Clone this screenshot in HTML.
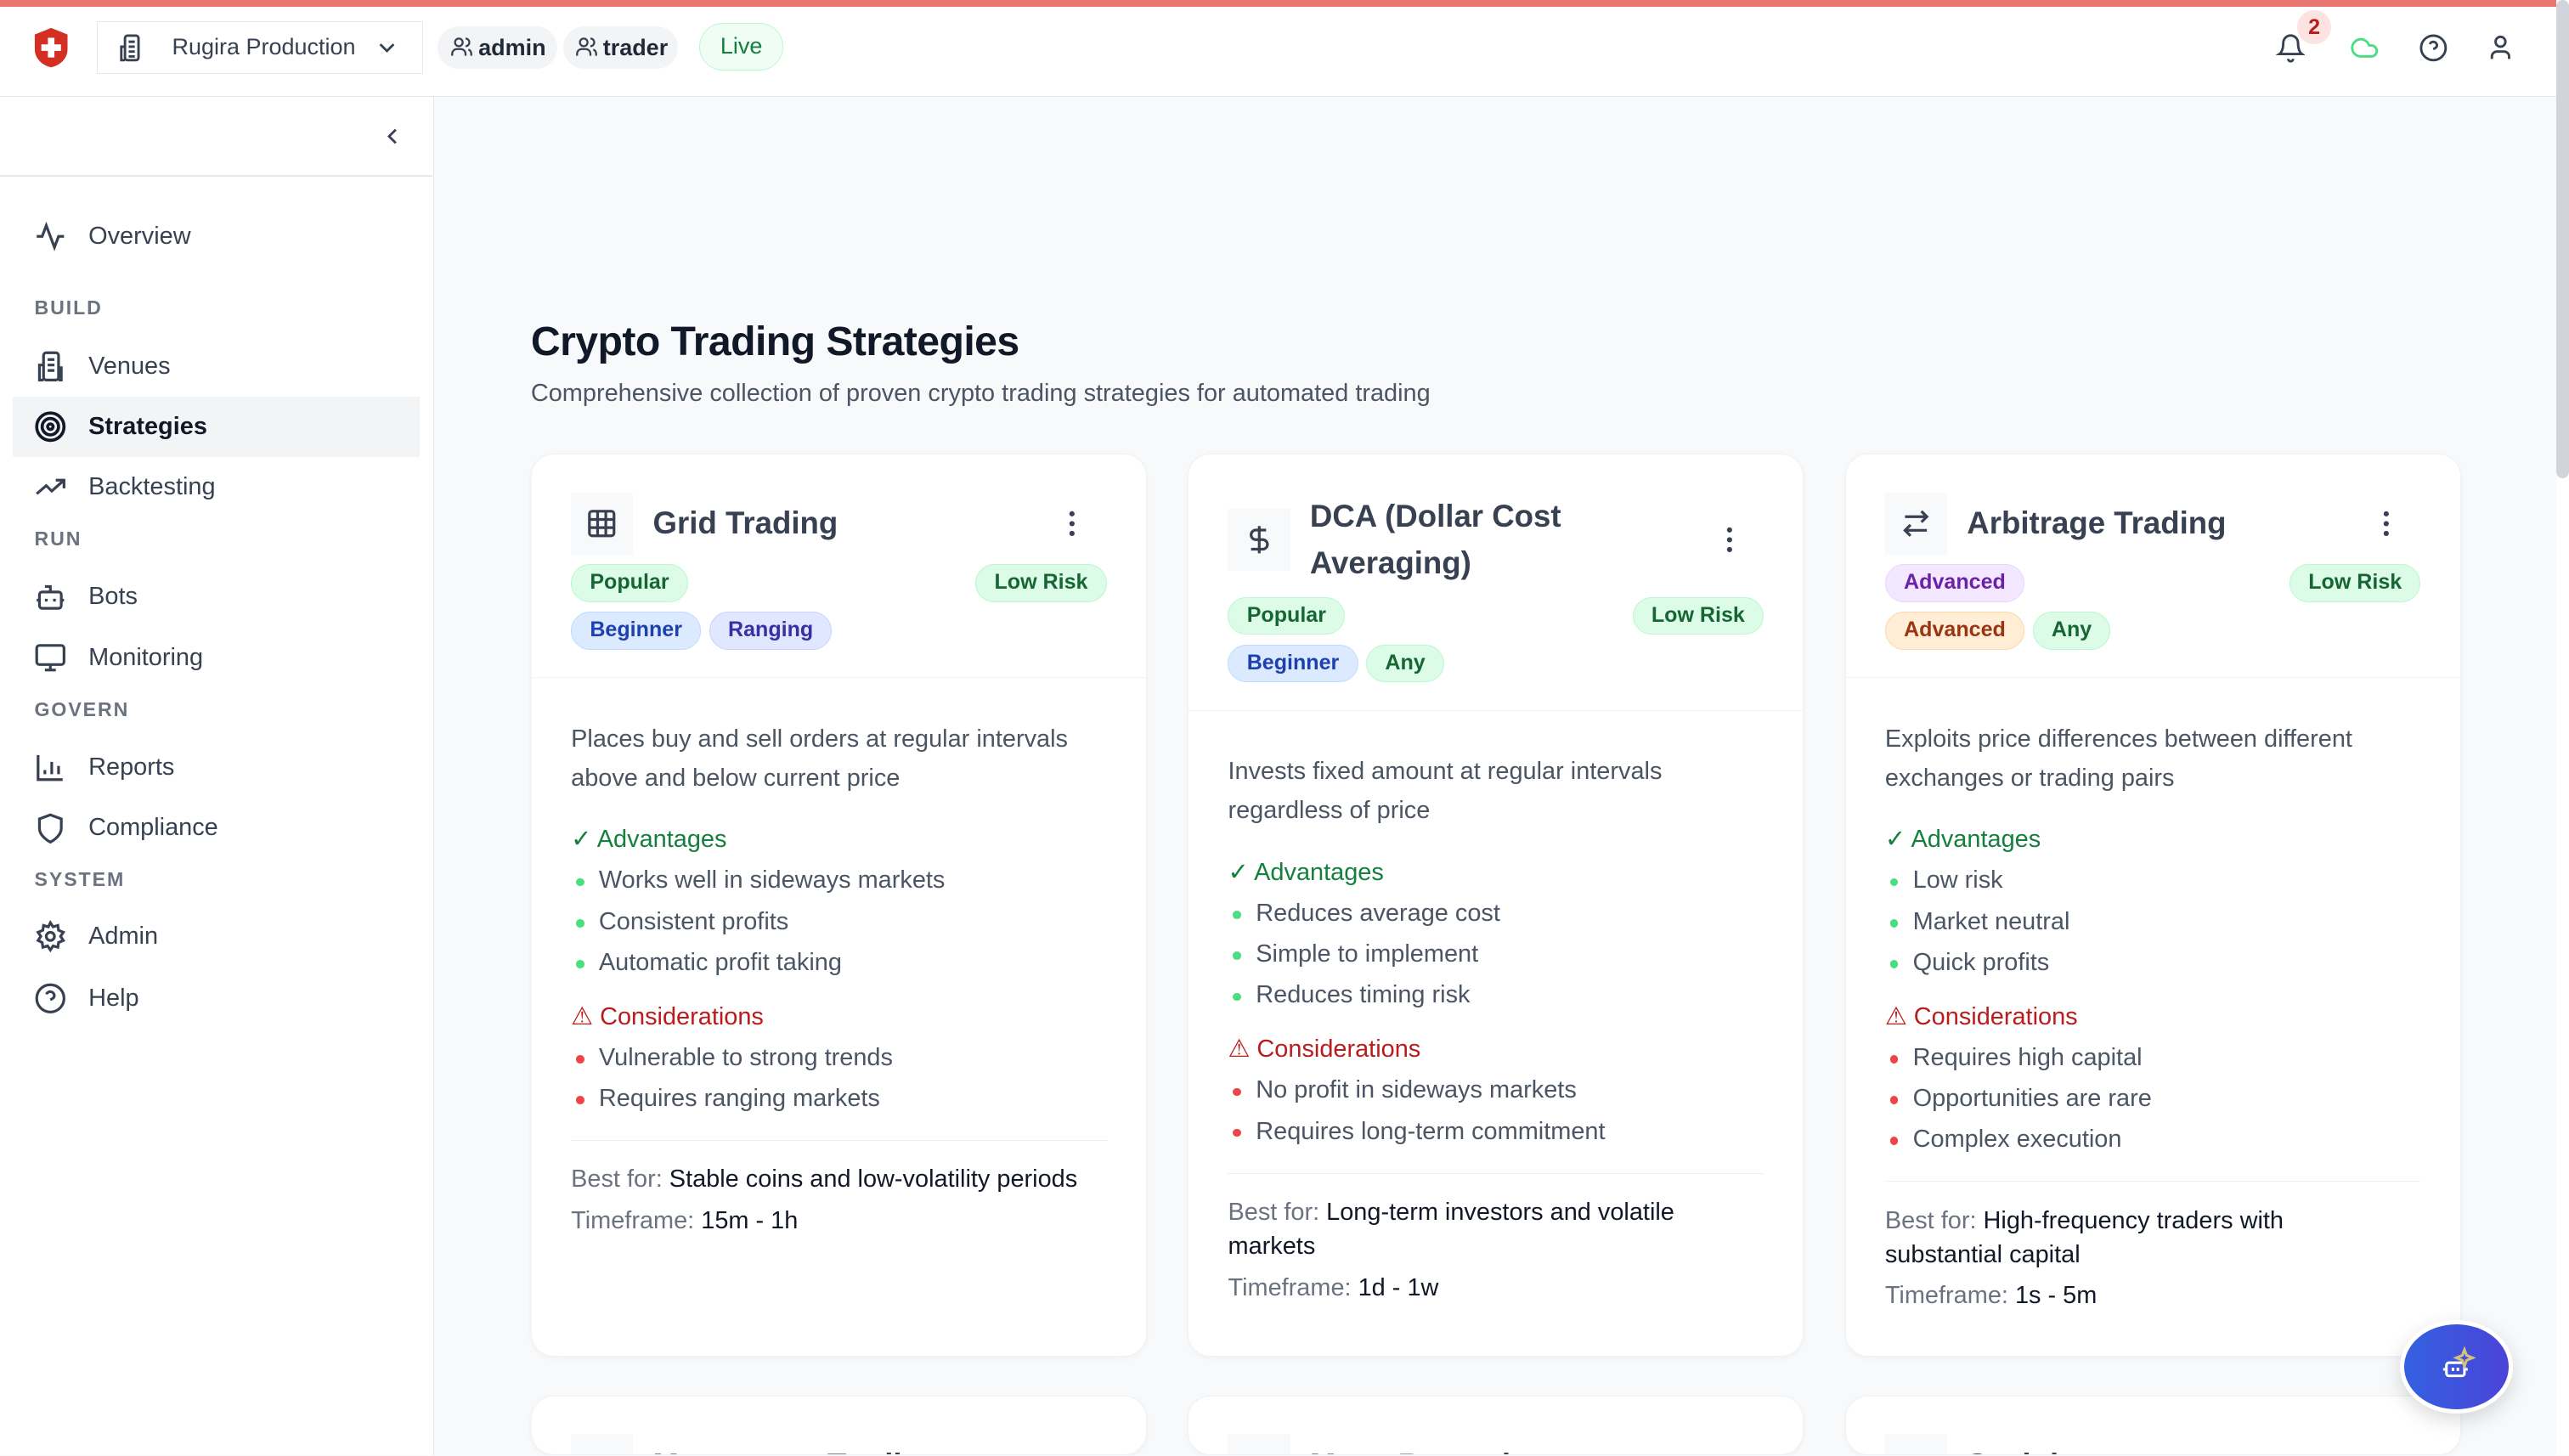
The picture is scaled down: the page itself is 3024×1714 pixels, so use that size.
<!DOCTYPE html>
<html><head><meta charset="utf-8"><style>
*{box-sizing:border-box;margin:0;padding:0}
html,body{width:3024px;height:1714px;overflow:hidden;background:#f8f9fb}
#w{zoom:1.92857;width:1568px;height:888px;position:relative;font-family:"Liberation Sans",sans-serif;color:#1f2937;overflow:hidden;background:#f8f9fb}
.abs{position:absolute}
#top{left:0;top:0;width:1568px;height:4px;background:#e87772}
#hdr{left:0;top:4px;width:1560px;height:55px;background:#fff;border-bottom:1px solid #e5e7eb}
#side{left:0;top:59px;width:265px;height:830px;background:#fff;border-right:1px solid #e5e7eb}
.nav{position:absolute;left:8px;width:248px;height:37px;display:flex;align-items:center;font-size:15px;color:#374151}
.nav svg{position:absolute;left:13px;width:20px;height:20px}
.nav span{position:absolute;left:46px}
.nav.act{background:#f3f4f6;color:#111827;font-weight:bold}
.sec{position:absolute;left:21px;font-size:12px;font-weight:bold;letter-spacing:1px;color:#6b7280}
.card{position:absolute;width:376px;background:#fff;border-radius:14px;box-shadow:0 1px 3px rgba(0,0,0,.04);border:1px solid #f1f2f4;overflow:hidden}
.ch{padding:23px 24px 17px 24px;border-bottom:1px solid #f1f2f4}
.tr{display:flex;align-items:center;min-height:38px;position:relative}
.ib{width:38px;height:38px;background:#f8f9fb;display:flex;align-items:center;justify-content:center;flex:none}
.tt{font-size:19px;font-weight:bold;color:#374151;margin-left:12px;line-height:29px;width:240px}
.keb{position:absolute;right:19px;top:50%;margin-top:-8px;width:4px;height:16px}
.bd{display:flex;justify-content:space-between;margin-top:6px}
.b{display:inline-block;height:23px;line-height:21px;padding:0 11px;border-radius:12px;font-size:13px;font-weight:bold;border:1px solid}
.g{background:#dcfce7;border-color:#bbf7d0;color:#166534}
.bl{background:#dbeafe;border-color:#bfdbfe;color:#1e40af}
.in{background:#e0e7ff;border-color:#c7d2fe;color:#3730a3}
.pu{background:#f3e8ff;border-color:#e9d5ff;color:#6b21a8}
.or{background:#ffedd5;border-color:#fed7aa;color:#9a3412}
.row2{margin-top:6px}
.row2 .b{margin-right:5px}
.cb{padding:25px 24px 0 24px;font-size:15px;color:#4b5563}
.ds{line-height:24px}
.hd{margin-top:13px;line-height:25px}
.ga{color:#15803d}.ra{color:#b91c1c}
ul{list-style:none}
li{line-height:25px;padding-left:17px;position:relative}
li:before{content:"";position:absolute;left:3px;top:11px;width:5px;height:5px;border-radius:50%}
.gl li:before{background:#4ade80}.rl li:before{background:#ef4444}
.hd2{margin-top:8px}
.bf{border-top:1px solid #eceef1;margin-top:13px;padding-top:13px}
.bf p{line-height:21px;margin-bottom:4px;color:#6b7280}
.bf b{font-weight:normal;color:#111827}
</style></head><body><div id="w">
<div id="top" class="abs"></div>
<div id="hdr" class="abs">
 <svg class="abs" style="left:20px;top:12px" width="22" height="26" viewBox="0 0 22 26"><path d="M11 1 L21 5 V14 C21 20 16 24 11 25 C6 24 1 20 1 14 V5 Z" fill="#d32f23"/><path d="M9 7h4v4h4v4h-4v4h-4v-4h-4v-4h4z" fill="#fff"/></svg>
 <div class="abs" style="left:59px;top:9px;width:199px;height:32px;border:1px solid #e5e7eb;background:#fff"></div>
 <svg class="abs" style="left:71px;top:16px" width="18" height="18" viewBox="0 0 24 24" fill="none" stroke="#374151" stroke-width="2"><rect x="7" y="2" width="11" height="20" rx="2"/><path d="M7 11H4v11h3M10 7h5M10 11h5M10 15h5M10 19h5"/></svg>
 <div class="abs" style="left:105px;top:17px;font-size:14px;color:#374151">Rugira Production</div>
 <svg class="abs" style="left:229px;top:18px" width="14" height="14" viewBox="0 0 24 24" fill="none" stroke="#374151" stroke-width="2.5"><path d="M5 9l7 7 7-7"/></svg>
 <div class="abs" style="left:267px;top:12px;width:73px;height:26px;border-radius:13px;background:#f3f4f6;font-size:14px;font-weight:bold;line-height:26px;padding-left:25px">admin</div>
 <div class="abs" style="left:344px;top:12px;width:70px;height:26px;border-radius:13px;background:#f3f4f6;font-size:14px;font-weight:bold;line-height:26px;padding-left:24px">trader</div>
 <svg class="abs" style="left:275px;top:18px" width="14" height="14" viewBox="0 0 24 24" fill="none" stroke="#374151" stroke-width="2"><circle cx="9" cy="7" r="4"/><path d="M2 21v-2a5 5 0 0 1 5-5h4a5 5 0 0 1 5 5v2M16 3a4 4 0 0 1 0 8M22 21v-2a5 5 0 0 0-3-4.5"/></svg>
 <svg class="abs" style="left:351px;top:18px" width="14" height="14" viewBox="0 0 24 24" fill="none" stroke="#374151" stroke-width="2"><circle cx="9" cy="7" r="4"/><path d="M2 21v-2a5 5 0 0 1 5-5h4a5 5 0 0 1 5 5v2M16 3a4 4 0 0 1 0 8M22 21v-2a5 5 0 0 0-3-4.5"/></svg>
 <div class="abs" style="left:427px;top:10px;width:51px;height:29px;border-radius:15px;background:#f0fdf4;border:1px solid #bbf7d0;color:#15803d;font-size:14px;line-height:27px;text-align:center">Live</div>
 <svg class="abs" style="left:1389px;top:15px" width="18" height="20" viewBox="0 0 24 24" fill="none" stroke="#374151" stroke-width="2"><path d="M6 8a6 6 0 0 1 12 0c0 7 3 9 3 9H3s3-2 3-9M10 21a2 2 0 0 0 4 0"/></svg>
 <div class="abs" style="left:1402px;top:2px;width:21px;height:21px;border-radius:50%;background:#fde2e2;color:#b91c1c;font-size:13px;font-weight:bold;text-align:center;line-height:21px">2</div>
 <svg class="abs" style="left:1433px;top:16px" width="20" height="18" viewBox="0 0 24 24" fill="none" stroke="#4ade80" stroke-width="2"><path d="M17.5 19H9a7 7 0 1 1 6.7-9h1.8a4.5 4.5 0 1 1 0 9z"/></svg>
 <svg class="abs" style="left:1476px;top:16px" width="18" height="18" viewBox="0 0 24 24" fill="none" stroke="#374151" stroke-width="2"><circle cx="12" cy="12" r="10"/><path d="M9.1 9a3 3 0 0 1 5.8 1c0 2-3 3-3 3M12 17h.01"/></svg>
 <svg class="abs" style="left:1517px;top:16px" width="18" height="18" viewBox="0 0 24 24" fill="none" stroke="#374151" stroke-width="2"><circle cx="12" cy="7" r="4"/><path d="M5 21v-2a4 4 0 0 1 4-4h6a4 4 0 0 1 4 4v2"/></svg>
</div>
<div class="abs" style="left:1560px;top:0;width:8px;height:889px;background:#fff"></div>
<div class="abs" style="left:1560px;top:0;width:8px;height:292px;background:#d1d5db;border-radius:4px"></div>
<div id="side" class="abs">
 <div class="abs" style="left:0;top:48px;width:264px;height:1px;background:#e5e7eb"></div>
 <svg class="abs" style="left:233px;top:17px" width="14" height="14" viewBox="0 0 24 24" fill="none" stroke="#374151" stroke-width="2.5"><path d="M15 5l-7 7 7 7"/></svg>
</div>
<div class="abs" style="left:0;top:60px;width:264px">
 <div class="nav" style="top:66px"><svg viewBox="0 0 24 24" fill="none" stroke="#374151" stroke-width="2"><path d="M2 12h4l3-8 6 16 3-8h4"/></svg><span>Overview</span></div>
 <div class="sec" style="top:121px">BUILD</div>
 <div class="nav" style="top:145px"><svg viewBox="0 0 24 24" fill="none" stroke="#374151" stroke-width="2"><rect x="7" y="2" width="11" height="20" rx="2"/><path d="M7 11H4v11h3M18 13h2v9h-2M10 7h5M10 11h5M10 15h5"/></svg><span>Venues</span></div>
 <div class="nav act" style="top:182px"><svg viewBox="0 0 24 24" fill="none" stroke="#111827" stroke-width="2.3"><circle cx="12" cy="12" r="10"/><circle cx="12" cy="12" r="6"/><circle cx="12" cy="12" r="2"/></svg><span>Strategies</span></div>
 <div class="nav" style="top:219px"><svg viewBox="0 0 24 24" fill="none" stroke="#374151" stroke-width="2"><path d="M2 17l7-6 4 4 9-8M16 7h6v6"/></svg><span>Backtesting</span></div>
 <div class="sec" style="top:262px">RUN</div>
 <div class="nav" style="top:286px"><svg viewBox="0 0 24 24" fill="none" stroke="#374151" stroke-width="2"><rect x="4" y="8" width="16" height="12" rx="2"/><path d="M12 8V4H8M2 14h2M20 14h2M9 13v2M15 13v2"/></svg><span>Bots</span></div>
 <div class="nav" style="top:323px"><svg viewBox="0 0 24 24" fill="none" stroke="#374151" stroke-width="2"><rect x="2" y="3" width="20" height="14" rx="2"/><path d="M8 21h8M12 17v4"/></svg><span>Monitoring</span></div>
 <div class="sec" style="top:366px">GOVERN</div>
 <div class="nav" style="top:390px"><svg viewBox="0 0 24 24" fill="none" stroke="#374151" stroke-width="2"><path d="M3 3v18h18M8 17v-3M13 17V8M18 17v-6"/></svg><span>Reports</span></div>
 <div class="nav" style="top:427px"><svg viewBox="0 0 24 24" fill="none" stroke="#374151" stroke-width="2"><path d="M12 22s8-4 8-10V5l-8-3-8 3v7c0 6 8 10 8 10z"/></svg><span>Compliance</span></div>
 <div class="sec" style="top:470px">SYSTEM</div>
 <div class="nav" style="top:493px"><svg viewBox="0 0 24 24" fill="none" stroke="#374151" stroke-width="2"><circle cx="12" cy="12" r="3"/><path d="M12 2l2 3 3.5-1 .5 3.5 3.5 1.5-2 3 2 3-3.5 1.5-.5 3.5-3.5-1-2 3-2-3-3.5 1-.5-3.5L3 15l2-3-2-3 3.5-1.5L7 4l3.5 1z"/></svg><span>Admin</span></div>
 <div class="nav" style="top:531px"><svg viewBox="0 0 24 24" fill="none" stroke="#374151" stroke-width="2"><circle cx="12" cy="12" r="10"/><path d="M9.1 9a3 3 0 0 1 5.8 1c0 2-3 3-3 3M12 17h.01"/></svg><span>Help</span></div>
</div>

<div class="abs" style="left:324px;top:194px;font-size:25px;font-weight:bold;color:#111827;letter-spacing:-0.3px">Crypto Trading Strategies</div>
<div class="abs" style="left:324px;top:232px;font-size:15px;color:#4b5563">Comprehensive collection of proven crypto trading strategies for automated trading</div>

<div class="card" style="left:324px;top:277px;height:551px">
 <div class="ch"><div class="tr"><div class="ib"><svg width="20" height="20" viewBox="0 0 24 24" fill="none" stroke="#374151" stroke-width="2"><rect x="3" y="3" width="18" height="18" rx="2"/><path d="M3 9h18M3 15h18M9 3v18M15 3v18"/></svg></div><div class="tt">Grid Trading</div><svg class="keb" viewBox="0 0 4 16"><circle cx="2" cy="2" r="1.6" fill="#374151"/><circle cx="2" cy="8" r="1.6" fill="#374151"/><circle cx="2" cy="14" r="1.6" fill="#374151"/></svg></div>
 <div class="bd"><span class="b g">Popular</span><span class="b g">Low Risk</span></div>
 <div class="row2"><span class="b bl">Beginner</span><span class="b in">Ranging</span></div></div>
 <div class="cb"><div class="ds">Places buy and sell orders at regular intervals<br>above and below current price</div>
 <div class="hd ga">✓ Advantages</div><ul class="gl"><li>Works well in sideways markets</li><li>Consistent profits</li><li>Automatic profit taking</li></ul>
 <div class="hd hd2 ra">⚠ Considerations</div><ul class="rl"><li>Vulnerable to strong trends</li><li>Requires ranging markets</li></ul>
 <div class="bf"><p>Best for: <b>Stable coins and low-volatility periods</b></p><p>Timeframe: <b>15m - 1h</b></p></div></div>
</div>

<div class="card" style="left:725px;top:277px;height:551px">
 <div class="ch"><div class="tr"><div class="ib"><svg width="20" height="20" viewBox="0 0 24 24" fill="none" stroke="#374151" stroke-width="2"><path d="M12 2v20M17 5H9.5a3.5 3.5 0 0 0 0 7h5a3.5 3.5 0 0 1 0 7H6"/></svg></div><div class="tt">DCA (Dollar Cost<br>Averaging)</div><svg class="keb" viewBox="0 0 4 16"><circle cx="2" cy="2" r="1.6" fill="#374151"/><circle cx="2" cy="8" r="1.6" fill="#374151"/><circle cx="2" cy="14" r="1.6" fill="#374151"/></svg></div>
 <div class="bd"><span class="b g">Popular</span><span class="b g">Low Risk</span></div>
 <div class="row2"><span class="b bl">Beginner</span><span class="b g">Any</span></div></div>
 <div class="cb"><div class="ds">Invests fixed amount at regular intervals<br>regardless of price</div>
 <div class="hd ga">✓ Advantages</div><ul class="gl"><li>Reduces average cost</li><li>Simple to implement</li><li>Reduces timing risk</li></ul>
 <div class="hd hd2 ra">⚠ Considerations</div><ul class="rl"><li>No profit in sideways markets</li><li>Requires long-term commitment</li></ul>
 <div class="bf"><p>Best for: <b>Long-term investors and volatile<br>markets</b></p><p>Timeframe: <b>1d - 1w</b></p></div></div>
</div>

<div class="card" style="left:1126px;top:277px;height:551px">
 <div class="ch"><div class="tr"><div class="ib"><svg width="20" height="20" viewBox="0 0 24 24" fill="none" stroke="#374151" stroke-width="2"><path d="M16 3l4 4-4 4M20 7H4M8 21l-4-4 4-4M4 17h16"/></svg></div><div class="tt">Arbitrage Trading</div><svg class="keb" viewBox="0 0 4 16"><circle cx="2" cy="2" r="1.6" fill="#374151"/><circle cx="2" cy="8" r="1.6" fill="#374151"/><circle cx="2" cy="14" r="1.6" fill="#374151"/></svg></div>
 <div class="bd"><span class="b pu">Advanced</span><span class="b g">Low Risk</span></div>
 <div class="row2"><span class="b or">Advanced</span><span class="b g">Any</span></div></div>
 <div class="cb"><div class="ds">Exploits price differences between different<br>exchanges or trading pairs</div>
 <div class="hd ga">✓ Advantages</div><ul class="gl"><li>Low risk</li><li>Market neutral</li><li>Quick profits</li></ul>
 <div class="hd hd2 ra">⚠ Considerations</div><ul class="rl"><li>Requires high capital</li><li>Opportunities are rare</li><li>Complex execution</li></ul>
 <div class="bf"><p>Best for: <b>High-frequency traders with<br>substantial capital</b></p><p>Timeframe: <b>1s - 5m</b></p></div></div>
</div>

<div class="card" style="left:324px;top:852px;height:36px"><div class="ch"><div class="tr"><div class="ib"></div><div class="tt">Momentum Trading</div></div></div></div>
<div class="card" style="left:725px;top:852px;height:36px"><div class="ch"><div class="tr"><div class="ib"></div><div class="tt">Mean Reversion</div></div></div></div>
<div class="card" style="left:1126px;top:852px;height:36px"><div class="ch"><div class="tr"><div class="ib"></div><div class="tt">Scalping</div></div></div></div>

<div class="abs" style="left:1465px;top:806px;width:69px;height:57px;border-radius:50%;background:linear-gradient(90deg,#3461e0,#4a44d8);border:3px solid #fff;box-shadow:0 4px 12px rgba(0,0,0,.15)"></div>
<svg class="abs" style="left:1489px;top:821px" width="24" height="24" viewBox="0 0 24 24" fill="none" stroke-width="1.6"><rect x="4" y="11" width="11" height="8" rx="1.5" stroke="#fff"/><path d="M2 15h2M15 15h2M8 14v2M11 14v2" stroke="#fff"/><path d="M15 3l1.3 3.5L20 8l-3.7 1.5L15 13l-1.3-3.5L10 8l3.7-1.5z" stroke="#d6c27a"/></svg>
</div></body></html>
